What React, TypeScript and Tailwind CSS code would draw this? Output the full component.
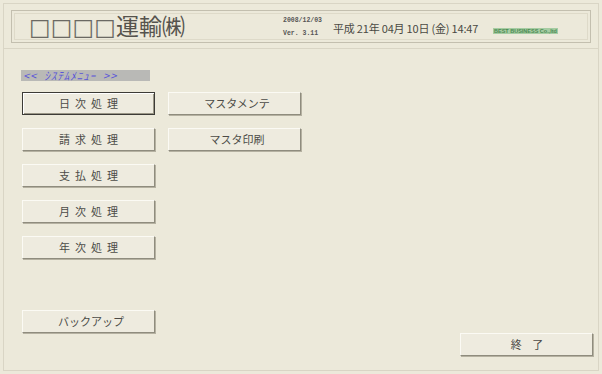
const jp = 'font-["Noto_Sans_CJK_JP","Noto_Sans",sans-serif]'

function Btn({
  label,
  focused = false,
  tracking = 'tracking-[5px]',
  className = '',
}: {
  label: string
  focused?: boolean
  tracking?: string
  className?: string
}) {
  const edge = focused
    ? 'border border-[#3c3b36] shadow-[inset_1px_1px_0_#ffffff,inset_-1px_-1px_0_#9a9686]'
    : 'border border-t-[#fbfaf4] border-l-[#fbfaf4] border-b-[#8f8c7e] border-r-[#8f8c7e] shadow-[1px_1px_0_#b5b1a1]'
  return (
    <div
      className={`w-[133px] h-[23px] bg-[#eeebdf] flex items-center justify-center text-[11px] leading-none text-[#4c4b47] ${tracking} ${edge} ${className}`}
    >
      <span className="pl-[5px]">{label}</span>
    </div>
  )
}

export default function App() {
  return (
    <div className={`w-[602px] h-[374px] bg-[#ece9da] p-[3px] ${jp}`}>
      <div className="h-full border border-[#d9d5c5] flex flex-col">
        {/* ヘッダー */}
        <div className="px-[7px] pt-[6px] pb-[5px]">
          <div className="h-[33px] border border-[#c3bfaf] p-[2px]">
            <div className="h-full border border-[#dedac9] flex items-center pl-[14px]">
              <div className="w-[254px] text-[23px] leading-none text-[#55534d]">
                <span className="font-['DejaVu_Sans',sans-serif] text-[#6b6963]">□□□□</span>
                運輸㈱
              </div>
              <div className="w-[50px] flex flex-col gap-[6px] mt-[2px] font-['Liberation_Mono',monospace] text-[6.5px] leading-none font-bold text-[#555]">
                <span>2008/12/03</span>
                <span>Ver. 3.11</span>
              </div>
              <div className="w-[160px] text-[11px] leading-none text-[#4a4944] mt-[4px] whitespace-pre tracking-[-0.2px]">
                平成 21年 04月 10日 (金) 14:47
              </div>
              <div className="mt-[9px] h-[6px] px-[1px] bg-[#a6cca2] text-[#4c8a52] text-[5.5px] leading-[6px] font-['Liberation_Sans',sans-serif] font-bold whitespace-pre">
                BEST BUSINESS Co.,ltd
              </div>
            </div>
          </div>
        </div>

        {/* メニュー */}
        <div className="flex-1 border-t border-[#d9d5c5] flex flex-col pl-[17px] pr-[5px] pt-[21px]">
          <div className="w-[129px] h-[11px] bg-[#b9b9b6] text-[#5a55d8] text-[11px] leading-[11px] italic pl-[2px] whitespace-pre tracking-[1px]">
            {'<<  ｼｽﾃﾑﾒﾆｭｰ  >>'}
          </div>

          <div className="flex gap-[13px] mt-[11px] pl-[1px]">
            <div className="flex flex-col gap-[13px]">
              <Btn label="日次処理" focused />
              <Btn label="請求処理" />
              <Btn label="支払処理" />
              <Btn label="月次処理" />
              <Btn label="年次処理" />
            </div>
            <div className="flex flex-col gap-[13px]">
              <Btn label="マスタメンテ" tracking="tracking-[0px]" />
              <Btn label="マスタ印刷" tracking="tracking-[0px]" />
            </div>
          </div>

          <div className="mt-[51px] pl-[1px]">
            <Btn label="バックアップ" tracking="tracking-[0px]" />
          </div>

          <div className="flex justify-end">
            <Btn label="終 了" tracking="tracking-[4px]" />
          </div>
        </div>
      </div>
    </div>
  )
}
